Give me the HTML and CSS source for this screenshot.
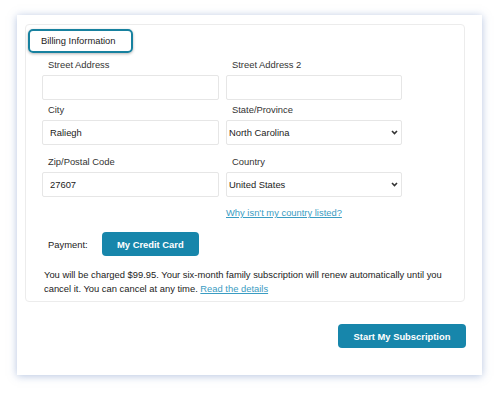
FILE: index.html
```html
<!DOCTYPE html>
<html lang="en">
<head>
    <meta charset="UTF-8">
    <meta name="viewport" content="width=device-width, initial-scale=1.0">
    <title>Billing</title>
    <link rel="stylesheet" href="styles.css">
</head>
<body>
    <div class="card">
        <div class="panel">
            <div class="legend">Billing Information</div>
            <div class="fields">
                <div class="field">
                    <label>Street Address</label>
                    <input type="text">
                </div>
                <div class="field">
                    <label>Street Address 2</label>
                    <input type="text">
                </div>
                <div class="field">
                    <label>City</label>
                    <input type="text" value="Raliegh">
                </div>
                <div class="field">
                    <label>State/Province</label>
                    <div class="select-wrap">
                        <select>
                            <option>North Carolina</option>
                        </select>
                        <svg class="chevron" width="7" height="5" viewBox="0 0 7 5"><path d="M1 1 L3.5 3.5 L6 1" fill="none" stroke="#333" stroke-width="1.6"/></svg>
                    </div>
                </div>
                <div class="field spaced">
                    <label>Zip/Postal Code</label>
                    <input type="text" value="27607">
                </div>
                <div class="field spaced">
                    <label>Country</label>
                    <div class="select-wrap">
                        <select>
                            <option>United States</option>
                        </select>
                        <svg class="chevron" width="7" height="5" viewBox="0 0 7 5"><path d="M1 1 L3.5 3.5 L6 1" fill="none" stroke="#333" stroke-width="1.6"/></svg>
                    </div>
                </div>
                <div></div>
                <div class="link-row"><a href="#">Why isn't my country listed?</a></div>
            </div>
            <div class="payment">
                <span>Payment:</span>
                <button class="btn">My Credit Card</button>
            </div>
            <p class="notice"><span class="line">You will be charged $99.95. Your six-month family subscription will renew automatically until you</span> <span class="line">cancel it. You can cancel at any time. <a href="#">Read the details</a></span></p>
        </div>
        <div class="actions">
            <button class="btn big">Start My Subscription</button>
        </div>
    </div>
</body>
</html>
```

FILE: styles.css
```css
html, body {
    height: 394px;
    overflow: hidden;
}
body {
    margin: 0;
    padding: 15px 0 0 17px;
    box-sizing: border-box;
    background: #fff;
    font-family: 'Liberation Sans', Arial, sans-serif;
    font-size: 9.4px;
    color: #222;
}
.card {
    width: 465px;
    height: 360px;
    box-sizing: border-box;
    padding: 9px 17px 0 8px;
    background: #fff;
    box-shadow: 0 1px 8px rgba(110, 140, 195, 0.5);
}
.panel {
    border: 1px solid #ececec;
    border-radius: 4px;
    padding: 4px 0 6px 2px;
}
.legend {
    display: inline-block;
    width: 105px;
    height: 24px;
    box-sizing: border-box;
    border: 2.5px solid #17819f;
    border-radius: 5px;
    padding: 0 0 0 11px;
    line-height: 19px;
    color: #222;
    box-shadow: 0 1px 3px rgba(0, 0, 0, 0.3);
}
.fields {
    display: grid;
    grid-template-columns: 177px 176px;
    column-gap: 7px;
    padding-left: 14px;
    margin-top: 5px;
}
.field {
    display: flex;
    flex-direction: column;
    margin-bottom: 3px;
}
.field.spaced {
    margin-top: 7px;
}
.field label {
    line-height: 14px;
    margin: 0 0 3px 6px;
    color: #333;
}
.field input,
.field select {
    width: 100%;
    height: 25px;
    box-sizing: border-box;
    border: 1px solid #e6e6e6;
    border-radius: 2px;
    font-family: inherit;
    font-size: 9.4px;
    color: #222;
    background: #fff;
}
.field input {
    padding: 0 7px;
}
.field select {
    appearance: none;
    padding: 0 2px;
}
.select-wrap {
    position: relative;
}
.chevron {
    position: absolute;
    right: 4px;
    top: 10px;
}
.link-row {
    margin-top: 6px;
    line-height: 14px;
}
a {
    color: #3a9cc2;
}
.payment {
    display: flex;
    align-items: center;
    margin: 12px 0 0 20px;
}
.payment span {
    width: 54px;
}
.btn {
    height: 24px;
    padding: 0 15px;
    border: none;
    border-radius: 4px;
    background: #1786ab;
    color: #fff;
    font-family: inherit;
    font-size: 9.4px;
    font-weight: bold;
}
.notice {
    margin: 12px 0 0 16px;
    width: 410px;
    line-height: 13.5px;
}
.notice .line {
    display: block;
}
.actions {
    display: flex;
    justify-content: flex-end;
    margin-top: 22px;
}
.btn.big {
    width: 128px;
    padding: 0;
    margin-right: -1px;
}
```
